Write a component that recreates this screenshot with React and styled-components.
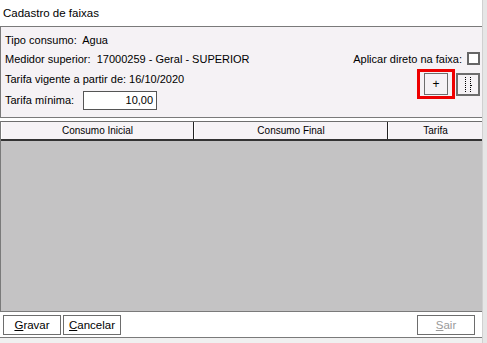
import React from 'react';
import styled, { createGlobalStyle } from 'styled-components';

const Global = createGlobalStyle`
  html, body { margin: 0; padding: 0; background: #fff; }
  body { font-family: "Liberation Sans", Arial, sans-serif; font-size: 11px; color: #000; }
`;

const Frame = styled.div`
  width: 487px;
  height: 343px;
  display: flex;
  background: #fff;
  overflow: hidden;
`;

const Window = styled.div`
  width: 483px;
  display: flex;
  flex-direction: column;
`;

const Edge = styled.div`
  width: 4px;
  background: #e6e6e6;
  border-left: 1px solid #d0d0d0;
`;

const Title = styled.div`
  height: 26px;
  padding-left: 3px;
  line-height: 26px;
  font-size: 11.5px;
`;

const Panel = styled.div`
  height: 90px;
  background: #f5f2f5;
  border: 1px solid #7a7a7a;
  border-right: none;
  padding: 0 4px;
  position: relative;
`;

const Line = styled.div`
  height: 19.5px;
  display: flex;
  align-items: center;
  margin-top: ${p => p.top || 0}px;
`;

const Input = styled.div`
  width: 69px;
  height: 17px;
  border: 1px solid #555;
  background: #fff;
  text-align: right;
  padding-right: 3px;
  line-height: 17px;
  margin-left: 9px;
`;

const Apply = styled.div`
  position: absolute;
  right: 2px;
  top: 25px;
  display: flex;
  align-items: center;
  gap: 5px;
`;

const Check = styled.div`
  width: 9px;
  height: 9px;
  border: 2px solid #666;
  background: #fff;
`;

const Tools = styled.div`
  position: absolute;
  right: 2px;
  top: 42px;
  display: flex;
  align-items: center;
  gap: 1px;
`;

const Highlight = styled.div`
  border: 3px solid #ee0000;
  padding: 1px 4px;
`;

const ToolBtn = styled.div`
  width: ${p => p.w}px;
  height: 20px;
  border: 1px solid #6d6d6d;
  ${p => p.thick && 'border-width: 2px; height: 19px;'}
  display: flex;
  align-items: center;
  justify-content: center;
  font-size: 12px;
  background: #f5f2f5;
`;

const Grid = styled.div`
  margin-top: 3px;
  flex: 1;
  display: flex;
  flex-direction: column;
  border-left: 1px solid #7a7a7a;
`;

const Header = styled.div`
  display: grid;
  grid-template-columns: 193px 194px 1fr;
  height: 17px;
  border-top: 1px solid #6e6e6e;
  border-bottom: 2px solid #333;
  background: #f6f3f6;
`;

const Col = styled.div`
  border-right: ${p => (p.last ? 'none' : '1px solid #222')};
  border-left: 1px solid #fff;
  text-align: center;
  font-size: 10px;
  line-height: 17px;
`;

const Body = styled.div`
  flex: 1;
  background: #c4c3c4;
`;

const Footer = styled.div`
  height: 25px;
  border-top: 1px solid #7a7a7a;
  border-bottom: 1px solid #7a7a7a;
  display: flex;
  align-items: center;
  padding: 0 7px 0 3px;
  gap: 2px;
`;

const Btn = styled.div`
  width: 56px;
  height: 18px;
  border: 1px solid #6d6d6d;
  box-shadow: inset 1px 1px 0 #fff;
  display: flex;
  align-items: center;
  justify-content: center;
  color: ${p => (p.disabled ? '#9a9a9a' : '#000')};
  margin-left: ${p => (p.push ? 'auto' : '0')};
  font-size: 11.5px;
`;

const Bottom = styled.div`
  height: 5px;
  background: #f0f0f0;
`;

function DottedIcon() {
  return (
    <svg width="10" height="17" viewBox="0 0 10 17">
      <line x1="2.5" y1="1" x2="2.5" y2="16" stroke="#000" strokeDasharray="1 1" />
      <line x1="7.5" y1="1" x2="7.5" y2="16" stroke="#000" strokeDasharray="1 1" />
      <line x1="7.5" y1="9.5" x2="9" y2="9.5" stroke="#000" />
    </svg>
  );
}

export default function App() {
  return (
    <Frame>
      <Global />
      <Window>
        <Title>Cadastro de faixas</Title>
        <Panel>
          <Line top={3}>Tipo consumo:&nbsp; Agua</Line>
          <Line>Medidor superior:&nbsp; 17000259 - Geral - SUPERIOR</Line>
          <Line>Tarifa vigente a partir de: 16/10/2020</Line>
          <Line top={2}>
            Tarifa mínima:
            <Input>10,00</Input>
          </Line>
          <Apply>
            Aplicar direto na faixa:
            <Check />
          </Apply>
          <Tools>
            <Highlight>
              <ToolBtn w={22}>+</ToolBtn>
            </Highlight>
            <ToolBtn w={20} thick>
              <DottedIcon />
            </ToolBtn>
          </Tools>
        </Panel>
        <Grid>
          <Header>
            <Col>Consumo Inicial</Col>
            <Col>Consumo Final</Col>
            <Col last>Tarifa</Col>
          </Header>
          <Body />
        </Grid>
        <Footer>
          <Btn><u>G</u>ravar</Btn>
          <Btn><u>C</u>ancelar</Btn>
          <Btn push disabled><u>S</u>air</Btn>
        </Footer>
        <Bottom />
      </Window>
      <Edge />
    </Frame>
  );
}
